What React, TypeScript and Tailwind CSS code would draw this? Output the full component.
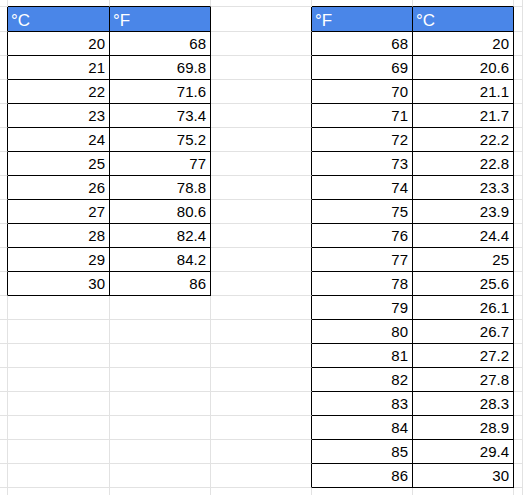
const leftRows: [string, string][] = [
  ['20', '68'], ['21', '69.8'], ['22', '71.6'], ['23', '73.4'], ['24', '75.2'], ['25', '77'],
  ['26', '78.8'], ['27', '80.6'], ['28', '82.4'], ['29', '84.2'], ['30', '86'],
];

const rightRows: [string, string][] = [
  ['68', '20'], ['69', '20.6'], ['70', '21.1'], ['71', '21.7'], ['72', '22.2'], ['73', '22.8'],
  ['74', '23.3'], ['75', '23.9'], ['76', '24.4'], ['77', '25'], ['78', '25.6'], ['79', '26.1'],
  ['80', '26.7'], ['81', '27.2'], ['82', '27.8'], ['83', '28.3'], ['84', '28.9'], ['85', '29.4'],
  ['86', '30'],
];

const NUM_ROWS = 22;
const NUM_COLS = 7;

// which table a cell belongs to (rows start at 1 = header)
function inTable(r: number, c: number) {
  if (r >= 1 && r <= 1 + leftRows.length && (c === 1 || c === 2)) return true;
  if (r >= 1 && r <= 1 + rightRows.length && (c === 4 || c === 5)) return true;
  return false;
}

function cellText(r: number, c: number) {
  if (r === 1) {
    if (c === 1 || c === 5) return '°C';
    if (c === 2 || c === 4) return '°F';
    return '';
  }
  const i = r - 2;
  if (c === 1 && leftRows[i]) return leftRows[i][0];
  if (c === 2 && leftRows[i]) return leftRows[i][1];
  if (c === 4 && rightRows[i]) return rightRows[i][0];
  if (c === 5 && rightRows[i]) return rightRows[i][1];
  return '';
}

function Cell({ r, c }: { r: number; c: number }) {
  const table = inTable(r, c);
  const rightBlack = table || inTable(r, c + 1);
  const bottomBlack = table || inTable(r + 1, c);
  const header = r === 1 && table;
  const text = cellText(r, c);

  return (
    <div
      className={`flex items-end overflow-hidden border-r border-b ${
        rightBlack ? 'border-r-black' : 'border-r-[#e2e2e2]'
      } ${bottomBlack ? 'border-b-black' : 'border-b-[#e2e2e2]'} ${
        header
          ? 'bg-[#4a86e8] text-white text-[17px] justify-start pl-[3px] pb-[2px]'
          : 'bg-white text-black text-[15px] justify-end pr-[4px] pb-[3px]'
      }`}
    >
      <span className="leading-[17px] whitespace-nowrap">{text}</span>
    </div>
  );
}

export default function App() {
  const cells = [];
  for (let r = 0; r < NUM_ROWS; r++) {
    for (let c = 0; c < NUM_COLS; c++) {
      cells.push(<Cell key={`${r}-${c}`} r={r} c={c} />);
    }
  }

  return (
    <div className="h-[495px] w-[523px] overflow-hidden bg-white font-['Liberation_Sans',Arial,sans-serif]">
      <div className="grid grid-cols-[8px_102px_101px_101px_101px_101px_1fr] grid-rows-[7px_25px_repeat(20,24px)]">
        {cells}
      </div>
    </div>
  );
}
